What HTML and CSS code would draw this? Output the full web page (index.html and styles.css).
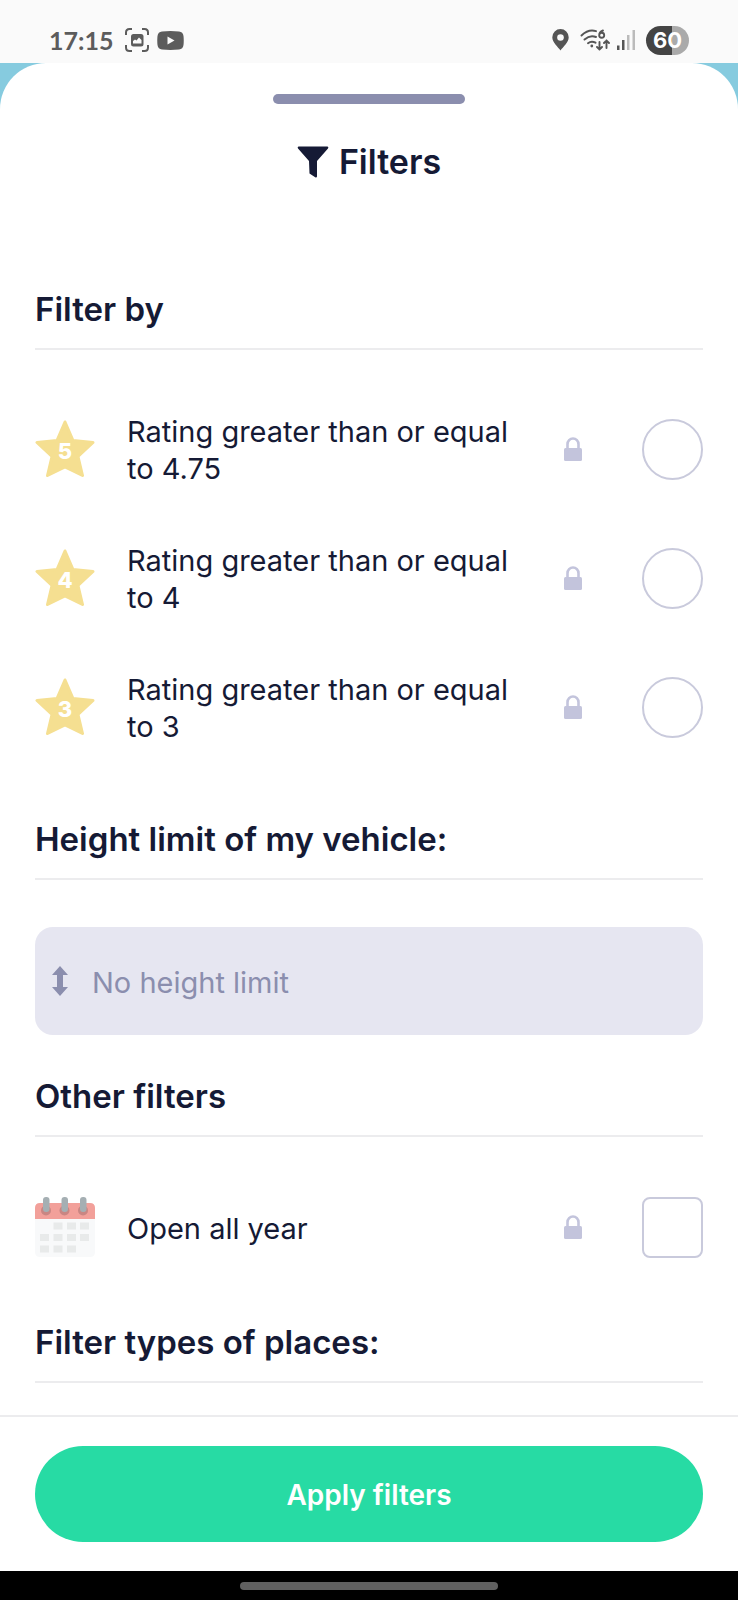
FILE: index.html
```html
<!DOCTYPE html>
<html lang="en">
<head>
<meta charset="utf-8">
<meta name="viewport" content="width=device-width, initial-scale=1">
<title>Filters</title>
<link rel="stylesheet" href="styles.css">
</head>
<body>
<svg class="defs" aria-hidden="true">
  <symbol id="lock" viewBox="0 0 18 24">
    <path d="M3.500 12V7.200a5.500 5.700 0 0 1 11 0V12" fill="none" stroke="#c3c4dc" stroke-width="2.600"/>
    <rect x="0" y="11" width="18" height="13" rx="1.500" fill="#c3c4dc"/>
  </symbol>
  <symbol id="star" viewBox="0 0 60 58">
    <path d="M30 2 38 20.500 58 22.500 43 36.500 47.500 55.500 30 47 12.500 55.500 17 36.500 2 22.500 22 20.500Z" fill="#f5df91" stroke="#f5df91" stroke-width="3" stroke-linejoin="round"/>
  </symbol>
</svg>
<header class="status">
  <div class="status-group">
    <time class="clock">17:15</time>
    <svg width="24" height="24" viewBox="0 0 24 24" aria-hidden="true">
      <path d="M1 7V4.500Q1 1 4.500 1H7M17 1h2.500Q23 1 23 4.500V7M23 17v2.500Q23 23 19.500 23H17M7 23H4.500Q1 23 1 19.500V17" fill="none" stroke="#5c5c5c" stroke-width="2"/>
      <rect x="6" y="6" width="12.500" height="12.500" rx="2.500" fill="#5c5c5c"/>
      <path d="M8 15.500v-2.500l2-1.500 1.500 1 2.500-3 2.500 2.500v3.500z" fill="#fafafa"/>
    </svg>
    <svg width="27" height="19" viewBox="0 0 27 19" aria-hidden="true">
      <path d="M5 .5Q13.500-.3 22 .5 26 .8 26.500 5q.5 4.500 0 9-.5 4.200-4.500 4.500-8.500.8-17 0Q1 18.200.5 14 0 9.500.5 5 1 .8 5 .5z" fill="#5c5c5c"/>
      <path d="M10.500 5.500v8l7-4z" fill="#fafafa"/>
    </svg>
  </div>
  <div class="status-group status-right">
    <svg width="17" height="22" viewBox="0 0 17 22" aria-hidden="true">
      <path d="M8.500 21.500C6 18 .3 13.500.3 8.300a8.200 8.200 0 0 1 16.400 0C16.700 13.500 11 18 8.500 21.500z" fill="#555"/>
      <circle cx="8.500" cy="8.500" r="3.300" fill="#fafafa"/>
    </svg>
    <svg class="wifi" width="30" height="24" viewBox="0 0 30 24" aria-hidden="true">
      <g fill="none" stroke="#555" stroke-width="1.900" stroke-linecap="round">
        <path d="M1.500 7.500Q8.500 .8 16 3.200M4.500 11.500Q10 6.500 16 9M8 15.200q3.500-2.700 7.500-.5"/>
        <path d="M23 2.500q-3.800 1.500-3.800 4.800a2.500 2.500 0 1 0 2.500-2.500q-1.200 0-2 1"/>
        <path d="M19.500 14v7.500m-2.500-2.500 2.500 2.500 2.500-2.500M26.500 20v-7.500m-2.500 2.500 2.500-2.500 2.500 2.500"/>
      </g>
      <circle cx="11.800" cy="18" r="1.400" fill="#555"/>
    </svg>
    <svg width="18" height="20" viewBox="0 0 18 20" aria-hidden="true">
      <rect x="0" y="15.500" width="2.500" height="4.500" fill="#555"/>
      <rect x="5" y="10" width="2.500" height="10" fill="#555"/>
      <rect x="10" y="5" width="2.500" height="15" fill="#bbb"/>
      <rect x="15.500" y="0" width="2.500" height="20" fill="#bbb"/>
    </svg>
    <span class="battery">60</span>
  </div>
</header>
<main class="backdrop">
  <div class="sheet">
    <div class="handle"></div>
    <h1 class="title">
      <svg width="32" height="32" viewBox="0 0 32 32" aria-hidden="true"><path d="M1.500.5h29q1.500.5.5 2L20 15v15.500q-.3 1.500-1.800.8L12.500 27.500 12 15 1 2.500Q0 1 1.500.5z" fill="#151a35"/></svg>
      Filters
    </h1>
    <form class="filters">
      <h2 class="heading">Filter by</h2>
      <div class="ratings">
        <label class="row">
          <span class="star"><svg viewBox="0 0 60 58" aria-hidden="true"><use href="#star"/></svg><b class="star-value">5</b></span>
          <span class="row-text">Rating greater than or equal to 4.75</span>
          <svg class="lock" aria-hidden="true"><use href="#lock"/></svg>
          <input class="choice radio" type="radio" name="rating">
        </label>
        <label class="row">
          <span class="star"><svg viewBox="0 0 60 58" aria-hidden="true"><use href="#star"/></svg><b class="star-value">4</b></span>
          <span class="row-text">Rating greater than or equal to 4</span>
          <svg class="lock" aria-hidden="true"><use href="#lock"/></svg>
          <input class="choice radio" type="radio" name="rating">
        </label>
        <label class="row">
          <span class="star"><svg viewBox="0 0 60 58" aria-hidden="true"><use href="#star"/></svg><b class="star-value">3</b></span>
          <span class="row-text">Rating greater than or equal to 3</span>
          <svg class="lock" aria-hidden="true"><use href="#lock"/></svg>
          <input class="choice radio" type="radio" name="rating">
        </label>
      </div>
      <h2 class="heading" id="height-label">Height limit of my vehicle:</h2>
      <div class="field">
        <svg width="16" height="30" viewBox="0 0 16 30" aria-hidden="true"><path d="M8 0l8 9h-5v12h5l-8 9-8-9h5V9H0z" fill="#8b8eae"/></svg>
        <input class="field-input" type="text" placeholder="No height limit" aria-labelledby="height-label">
      </div>
      <h2 class="heading">Other filters</h2>
      <label class="row other">
        <svg width="60" height="60" viewBox="0 0 60 60" aria-hidden="true">
          <path d="M0 20h60v35q0 5-5 5H5q-5 0-5-5z" fill="#f8f9fa"/>
          <path d="M0 22v-11q0-5 5-5h50q5 0 5 5v11z" fill="#f2a09a"/>
          <g fill="#c98683"><circle cx="11" cy="13.500" r="5"/><circle cx="29.500" cy="13.500" r="5"/><circle cx="48" cy="13.500" r="5"/></g>
          <g fill="#a5afb3"><rect x="8" width="6.500" height="15" rx="3"/><rect x="26.500" width="6.500" height="15" rx="3"/><rect x="45" width="6.500" height="15" rx="3"/></g>
          <path d="M18.500 25.500h9v7h-9zM32 25.500h9v7h-9zM45 25.500h9v7h-9zM5 37h9v7H5zM18.500 37h9v7h-9zM32 37h9v7h-9zM45 37h9v7h-9zM5 48.500h9v7H5zM18.500 48.500h9v7h-9zM32 48.500h9v7h-9z" fill="#e8eaea"/>
        </svg>
        <span class="row-text">Open all year</span>
        <svg class="lock" aria-hidden="true"><use href="#lock"/></svg>
        <input class="choice checkbox" type="checkbox">
      </label>
      <h2 class="heading">Filter types of places:</h2>
    </form>
    <footer class="footer">
      <button class="apply" type="button">Apply filters</button>
    </footer>
  </div>
</main>
<div class="navbar"><div class="navbar-pill"></div></div>
</body>
</html>
```
FILE: styles.css
```css
* {
  box-sizing: border-box;
}

body {
  display: flex;
  flex-direction: column;
  min-height: 100vh;
  margin: 0;
  background: #fff;
  color: #151a35;
  font-family: Inter, "Liberation Sans", sans-serif;
  font-size: 29px;
  line-height: 37px;
}

svg {
  display: block;
  flex: none;
}

.defs {
  position: absolute;
  width: 0;
  height: 0;
}

.status {
  display: flex;
  justify-content: space-between;
  height: 63px;
  padding: 16px 49px 0;
  background: #fafafa;
}

.status-group {
  display: flex;
  align-items: center;
  gap: 8px;
  height: 48px;
}

.clock {
  margin-right: 4px;
  color: #5c5c5c;
  font-family: Lato, sans-serif;
  font-size: 25px;
  font-weight: 700;
}

.status-right {
  gap: 11px;
}

.wifi {
  margin-right: -4px;
}

.battery {
  width: 43px;
  border-radius: 15px;
  background: linear-gradient(90deg, #444 60%, #aaa 60%);
  color: #fff;
  font-size: 22px;
  font-weight: 700;
  line-height: 29px;
  text-align: center;
}

.backdrop {
  display: flex;
  flex: 1;
  flex-direction: column;
  background: linear-gradient(#86cbdf, #86cbdf) top / 100% 60px no-repeat;
}

.sheet {
  display: flex;
  flex: 1;
  flex-direction: column;
  padding-top: 31px;
  border-radius: 46px 46px 0 0;
  background: #fff;
}

.handle {
  width: 26%;
  height: 10px;
  margin: 0 auto;
  border-radius: 5px;
  background: #8b8eae;
}

.title {
  display: flex;
  align-items: center;
  justify-content: center;
  gap: 10px;
  margin: 36px 0 103px;
  font-size: 34px;
  font-weight: 600;
  line-height: 44px;
}

.filters {
  flex: 1;
  padding: 0 35px;
}

.heading {
  margin: 0;
  padding-bottom: 17px;
  border-bottom: 2px solid #ececee;
  font-size: 33px;
  font-weight: 600;
  line-height: 44px;
}

.ratings {
  display: grid;
  gap: 53px;
  padding: 61px 0 72px;
}

.row {
  display: grid;
  grid-template-columns: 61px 1fr 18px 121px;
  align-items: center;
  min-height: 76px;
}

.row-text {
  padding: 2px 32px 0 31px;
}

.star {
  position: relative;
  width: 60px;
}

.star svg {
  width: 60px;
  height: 58px;
}

.star-value {
  position: absolute;
  inset: 0;
  color: #fff;
  font-size: 22px;
  font-weight: 800;
  line-height: 62px;
  text-align: center;
}

.lock {
  width: 18px;
  height: 24px;
}

.choice {
  justify-self: end;
  width: 61px;
  height: 61px;
  margin: 0;
  border: 2px solid #c9cadc;
  background: #fff;
  appearance: none;
}

.radio {
  border-radius: 50%;
}

.checkbox {
  border-radius: 8px;
}

.field {
  display: flex;
  align-items: center;
  gap: 24px;
  height: 108px;
  margin: 47px 0 39px;
  padding: 0 17px;
  border-radius: 18px;
  background: #e6e6f1;
}

.field-input {
  flex: 1;
  min-width: 0;
  padding: 2px 0 0;
  border: 0;
  outline: 0;
  background: transparent;
  color: #151a35;
  font: inherit;
}

.field-input::placeholder {
  color: #8b8eae;
  opacity: 1;
}

.other {
  margin: 52px 0 55px;
}

.footer {
  padding: 29px 35px;
  border-top: 2px solid #ececee;
}

.apply {
  display: block;
  width: 100%;
  height: 96px;
  padding: 2px 0 0;
  border: 0;
  border-radius: 48px;
  background: #27dba4;
  color: #fff;
  font: inherit;
  font-size: 28px;
  font-weight: 600;
}

.navbar {
  height: 29px;
  padding-top: 11px;
  background: #000;
}

.navbar-pill {
  width: 35%;
  height: 8px;
  margin: 0 auto;
  border-radius: 4px;
  background: #606060;
}
```
